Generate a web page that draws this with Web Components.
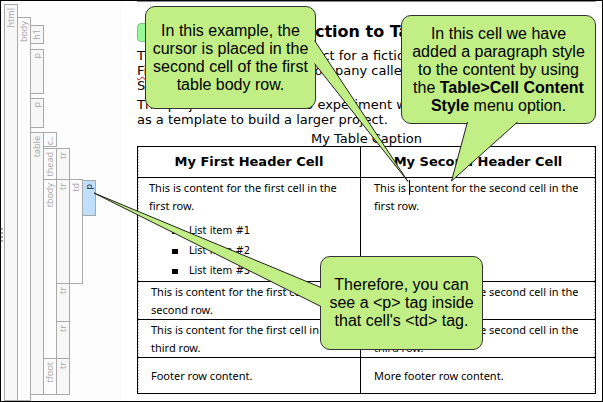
<!DOCTYPE html>
<html lang="en">
<head>
<meta charset="utf-8">
<title>Structure bars and table editor</title>
<style>
  body { margin: 0; background: #fff; }
  u { text-decoration: underline wavy #d00 1px; }
</style>
</head>
<body>
<editor-frame>
  <dom-node slot="structure" label="html" style="flex: 1; margin-top: 3px">
    <dom-node label="body" alt style="flex: 1; margin-top: 13px">
      <dom-node label="h1" style="--h: 19px; margin-top: 8px"></dom-node>
      <dom-node label="p" style="--h: 45px; margin-top: 5px"></dom-node>
      <dom-node label="p" style="--h: 30px; margin-top: 4px"></dom-node>
      <dom-node label="table" style="margin-top: 4px">
        <dom-node label="c.." alt style="--h: 15px"></dom-node>
        <dom-node label="thead" alt style="margin-top: 1px">
          <dom-node label="tr" style="--h: 32px"></dom-node>
        </dom-node>
        <dom-node label="tbody" alt joined>
          <dom-node label="tr" style="--h: 105px">
            <dom-node label="td" alt style="flex: 1">
              <dom-node label="p" selected style="--h: 36px; margin-top: 1px"></dom-node>
            </dom-node>
          </dom-node>
          <dom-node label="tr" joined style="--h: 39px"></dom-node>
          <dom-node label="tr" joined style="--h: 38px"></dom-node>
        </dom-node>
        <dom-node label="tfoot" alt joined>
          <dom-node label="tr" style="--h: 37px"></dom-node>
        </dom-node>
      </dom-node>
    </dom-node>
  </dom-node>

  <topic-page>
    <span slot="title">Introduction to Tables</span>
    <p>This is a sample tables project for a fictional<br><u>Fictionsoft</u> office software company called<br>Soft.</p>
    <p>This project can be used to experiment with or<br>as a template to build a larger project.</p>
    <content-table slot="table"></content-table>
  </topic-page>

  <speech-callout slot="notes" style="left: 144px; top: 5px; width: 171px; height: 103px">
    <svg slot="tail" style="left: 168px; top: 34px" width="100" height="146"><path d="M1.500 .5 95 141.500 1.500 23.500"/></svg>
    In this example, the<br>cursor is placed in the<br>second cell of the first<br>table body row.
  </speech-callout>
  <speech-callout slot="notes" style="left: 400px; top: 14px; width: 195px; height: 109px">
    <svg slot="tail" style="left: 48px; top: 106px" width="72" height="64"><path d="M18.500 1 2.500 60 68.500 1"/></svg>
    In this cell we have<br>added a paragraph style<br>to the content by using<br>the <b>Table&gt;Cell Content<br>Style</b> menu option.
  </speech-callout>
  <speech-callout slot="notes" style="left: 319px; top: 255px; width: 163px; height: 94px">
    <svg slot="tail" style="left: -228px; top: -65px" width="230" height="118"><path d="M229 96.500 2 2 229 115.500"/></svg>
    Therefore, you can<br>see a &lt;p&gt; tag inside<br>that cell's &lt;td&gt; tag.
  </speech-callout>
</editor-frame>

<script>
const define = (name, markup, setup) => {
  const template = document.createElement('template');
  template.innerHTML = markup;
  customElements.define(name, class extends HTMLElement {
    connectedCallback() {
      if (this.shadowRoot) return;
      this.attachShadow({ mode: 'open' }).append(template.content.cloneNode(true));
      if (setup) setup(this, this.shadowRoot);
    }
  });
};

define('editor-frame', `
  <style>
    :host { display: flex; position: relative; box-sizing: border-box; height: 100vh; overflow: hidden; border: 1px solid #000; background: #fff; }
    aside { display: flex; flex: none; width: 121px; background: #fcfcfc; }
    .grip { display: flex; flex-direction: column; align-self: center; gap: 2px; width: 3px; padding-top: 68px; }
    .grip i { width: 2px; height: 2px; background: #aaa; }
    .bars { display: flex; flex-direction: column; }
    main { flex: 1; min-width: 0; }
  </style>
  <aside>
    <div class="grip"><i></i><i></i><i></i><i></i></div>
    <div class="bars"><slot name="structure"></slot></div>
  </aside>
  <main><slot></slot></main>
  <slot name="notes"></slot>
`);

define('dom-node', `
  <style>
    :host { display: flex; align-items: stretch; }
    :host([joined]) { margin-top: -1px !important; }
    .bar { box-sizing: border-box; flex: none; width: 14px; min-height: var(--h, 0); margin-right: -1px; border: 1px solid #a9a9a9; background: #f7f7f7; color: #a9a9a9; }
    :host([alt]) .bar { background: #fcfcfc; }
    :host([selected]) .bar { background: #bfdfff; color: #222; }
    span { display: block; writing-mode: vertical-rl; transform: rotate(180deg); font: 9px/12px "Noto Sans", sans-serif; white-space: nowrap; padding-bottom: 3px; }
    .children { display: flex; flex-direction: column; --h: 0; }
  </style>
  <div class="bar"><span></span></div>
  <div class="children"><slot></slot></div>
`, (host, root) => { root.querySelector('span').textContent = host.getAttribute('label'); });

define('topic-page', `
  <style>
    :host { display: block; padding: 0 6px 0 15px; font: 13px/15px "DejaVu Sans", sans-serif; color: #000; }
    .top { height: 1px; background: #888; }
    header { display: flex; align-items: center; height: 20px; margin: 20px 0 6px; }
    .mark { box-sizing: border-box; width: 18px; height: 19px; border: 1px solid #8b8; border-radius: 4px; background: #98f898; }
    h1 { flex: 1; margin: 0; padding-right: 56px; font-size: 16px; line-height: 20px; text-align: center; }
    ::slotted(p) { margin: 0 0 4px; white-space: nowrap; }
  </style>
  <div class="top"></div>
  <header><span class="mark"></span><h1><slot name="title"></slot></h1></header>
  <slot></slot>
  <slot name="table"></slot>
`);

define('content-table', `
  <style>
    :host { display: block; }
    table { width: 100%; border-collapse: collapse; table-layout: fixed; border: 1px solid #000; }
    caption { font: 13px/15px "DejaVu Sans", sans-serif; }
    col:first-child { width: 223px; }
    th, td { border: 1px solid #000; padding: 1px 0 0 13px; text-align: left; vertical-align: top; font: 11px/18px "Noto Sans", sans-serif;
      background: repeating-linear-gradient(#aaa 0 1px, transparent 1px 3px) left / 1px 100% no-repeat; }
    th:last-child, td:last-child { background-position: right; }
    th { padding: 6px 0; font: bold 13px/18px "DejaVu Sans", sans-serif; text-align: center; }
    .lead td:first-child { padding-left: 11px; }
    p { margin: 0; }
    tfoot td { padding-top: 9px; padding-bottom: 8px; }
    ul { list-style: none; margin: 6px 0 0; padding: 0 0 0 23px; }
    li { display: flex; align-items: center; gap: 11px; font: 10px/20px "DejaVu Sans", sans-serif; }
    li::before { content: ""; width: 6px; height: 5px; background: #000; }
    .caret { border-left: 1px solid #000; margin-right: -1px; }
  </style>
  <table>
    <caption>My Table Caption</caption>
    <colgroup><col><col></colgroup>
    <thead><tr><th scope="col">My First Header Cell</th><th scope="col">My Second Header Cell</th></tr></thead>
    <tbody>
      <tr class="lead">
        <td>This is content for the first cell in the<br>first row.
          <ul><li>List item #1</li><li>List item #2</li><li>List item #3</li></ul>
        </td>
        <td><p>This is <span class="caret"></span>content for the second cell in the<br>first row.</p></td>
      </tr>
      <tr><td>This is content for the first cell in the<br>second row.</td><td>This is content for the second cell in the<br>second row.</td></tr>
      <tr><td>This is content for the first cell in the<br>third row.</td><td>This is content for the second cell in the<br>third row.</td></tr>
    </tbody>
    <tfoot><tr><td>Footer row content.</td><td>More footer row content.</td></tr></tfoot>
  </table>
`);

define('speech-callout', `
  <style>
    :host { position: absolute; display: block; }
    .bubble { box-sizing: border-box; height: 100%; display: flex; align-items: center; justify-content: center; border: 1px solid #333; border-radius: 10px; background: #c1ee85; }
    .text { font: 16px/18px "Liberation Sans", sans-serif; color: #000; text-align: center; white-space: nowrap; }
    ::slotted(svg) { position: absolute; fill: #c1ee85; stroke: #222; stroke-width: 1; }
  </style>
  <div class="bubble"><div class="text"><slot></slot></div></div>
  <slot name="tail"></slot>
`);
</script>
</body>
</html>
